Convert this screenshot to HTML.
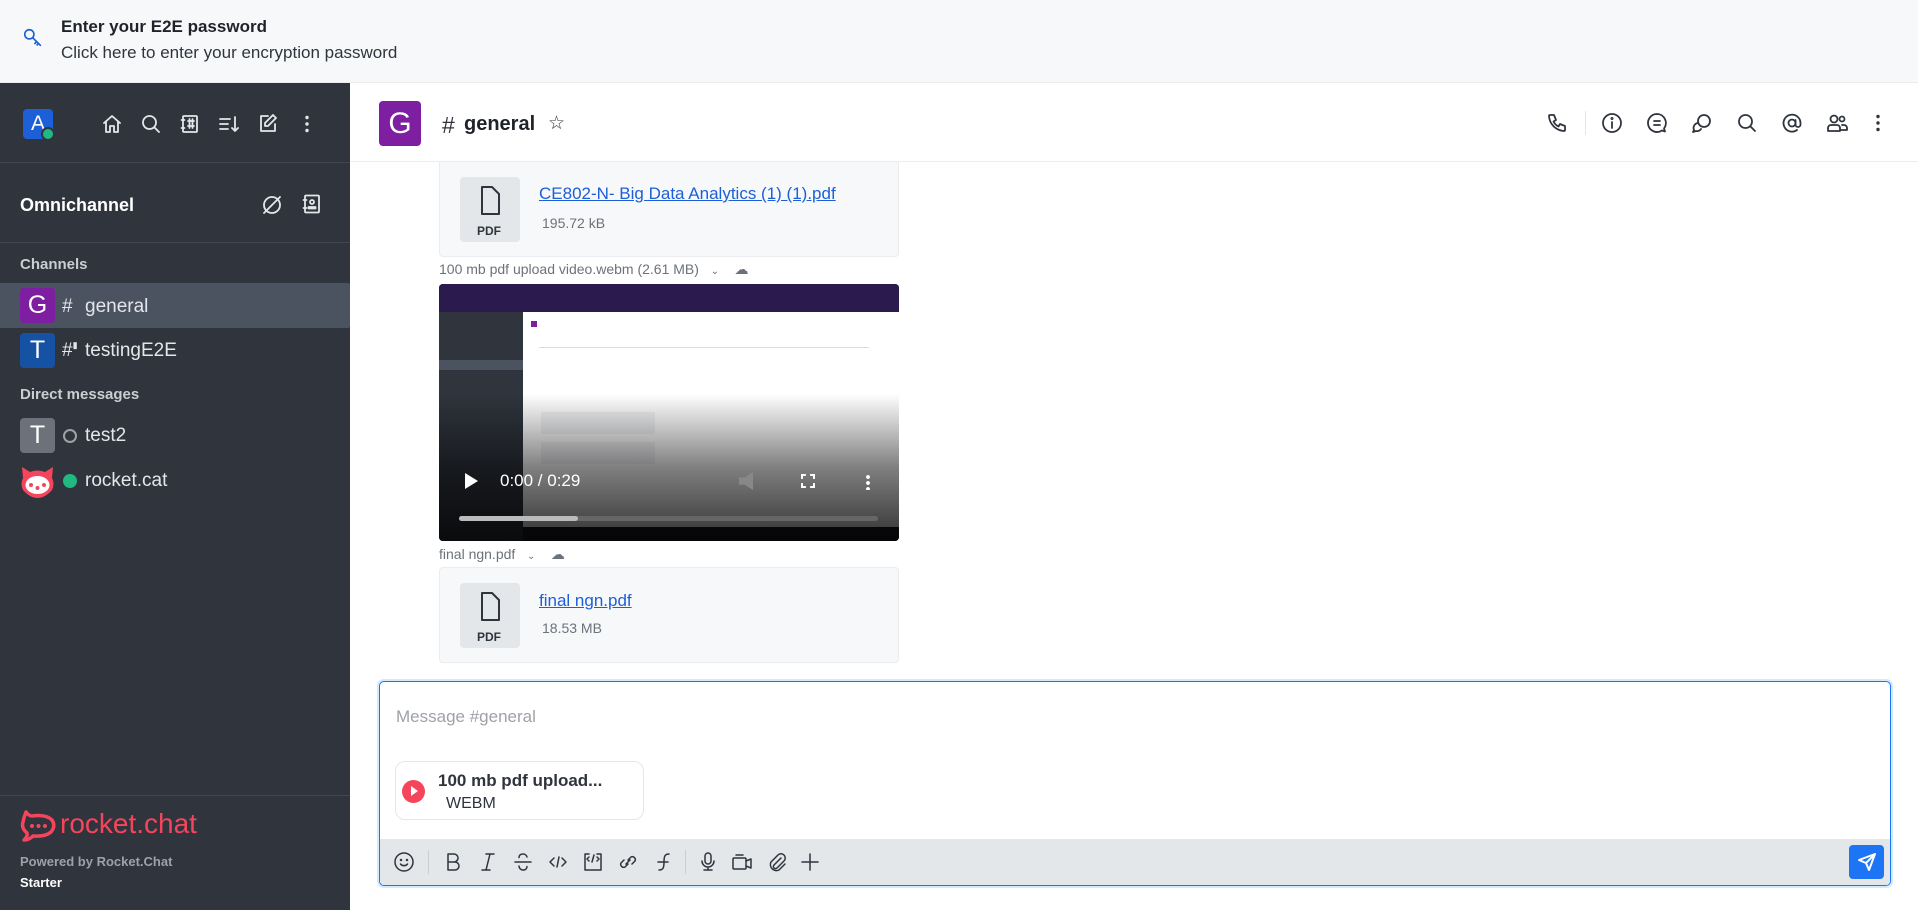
<!DOCTYPE html>
<html><head><meta charset="utf-8"><style>
*{box-sizing:border-box;margin:0;padding:0}
body{width:1918px;height:910px;overflow:hidden;font-family:"Liberation Sans",sans-serif;background:#fff;position:relative;color:#2f343d}
.abs{position:absolute}
svg{display:block}
.ic{stroke:currentColor;fill:none;stroke-width:1.8;stroke-linecap:round;stroke-linejoin:round}
</style></head><body>

<!-- banner -->
<div class="abs" style="left:0;top:0;width:1918px;height:83px;background:#f7f8fa;border-bottom:1px solid #ebecef"></div>
<svg class="abs ic" style="left:22px;top:27px;color:#1d5fd6" width="22" height="22" viewBox="0 0 24 24"><circle cx="8" cy="8" r="5"/><path d="M11.5 11.5 L20 20 M16 16 L14 18 M18 18 L16.5 19.5"/></svg>
<div class="abs" style="left:61px;top:17px;font-size:17px;font-weight:bold;color:#1f2329">Enter your E2E password</div>
<div class="abs" style="left:61px;top:43px;font-size:17px;color:#2f343d">Click here to enter your encryption password</div>

<!-- sidebar -->
<div class="abs" style="left:0;top:83px;width:350px;height:827px;background:#2f343d"></div>
<div class="abs" style="left:23px;top:109px;width:30px;height:30px;background:#1d5fd6;border-radius:4px;color:#fff;font-size:21px;text-align:center;line-height:30px">A</div>
<div class="abs" style="left:41px;top:127px;width:14px;height:14px;border-radius:50%;border:2px solid #2f343d;background:#1fb981"></div>
<div class="abs" style="left:100px;top:112px;color:#e4e7ea;display:flex;gap:15px">
<svg class="ic" width="24" height="24" viewBox="0 0 24 24"><path d="M4 11 L12 4 L20 11 M6 9.5 V20 H10 V14 H14 V20 H18 V9.5"/></svg>
<svg class="ic" width="24" height="24" viewBox="0 0 24 24"><circle cx="10.5" cy="10.5" r="6.5"/><path d="M15.5 15.5 L20 20"/></svg>
<svg class="ic" width="24" height="24" viewBox="0 0 24 24"><rect x="5" y="4" width="14" height="16" rx="1"/><path d="M3.5 8h3M3.5 16h3M10 9h6M10 14h6M11.5 7v9M14.5 7v9"/></svg>
<svg class="ic" width="24" height="24" viewBox="0 0 24 24"><path d="M3 7h10M3 12h8M3 17h8M18 5v14M15 16l3 3 3-3"/></svg>
<svg class="ic" width="24" height="24" viewBox="0 0 24 24"><path d="M12 4H5v15h14v-7M17 3l3 3-8 8h-3v-3z"/></svg>
<svg width="24" height="24" viewBox="0 0 24 24" fill="#e4e7ea"><circle cx="12" cy="5.5" r="1.7"/><circle cx="12" cy="12" r="1.7"/><circle cx="12" cy="18.5" r="1.7"/></svg>
</div>
<div class="abs" style="left:0;top:162px;width:350px;height:1px;background:#404754"></div>
<div class="abs" style="left:20px;top:195px;font-size:18px;font-weight:bold;color:#fff">Omnichannel</div>
<svg class="abs ic" style="left:260px;top:193px;color:#e4e7ea" width="24" height="24" viewBox="0 0 24 24"><circle cx="12" cy="12" r="8"/><path d="M4 20 L20 4"/></svg>
<svg class="abs ic" style="left:300px;top:192px;color:#e4e7ea" width="24" height="24" viewBox="0 0 24 24"><rect x="5" y="3.5" width="14" height="17" rx="1"/><path d="M3.5 8h3M3.5 16h3"/><circle cx="12" cy="10" r="2"/><path d="M8.5 16.5v-1.5h7v1.5z"/></svg>
<div class="abs" style="left:0;top:242px;width:350px;height:1px;background:#404754"></div>
<div class="abs" style="left:20px;top:256px;font-size:15px;font-weight:bold;color:#cbced1">Channels</div>
<div class="abs" style="left:0;top:283px;width:350px;height:45px;background:#4b5260;border-radius:0 2px 2px 0"></div>
<div class="abs" style="left:20px;top:288px;width:35px;height:35px;background:#7e1ea0;border-radius:4px;color:#fff;font-size:25px;text-align:center;line-height:35px">G</div>
<div class="abs" style="left:62px;top:296px;font-size:19px;color:#e4e7ea">#</div>
<div class="abs" style="left:85px;top:296px;font-size:19px;color:#e4e7ea">general</div>
<div class="abs" style="left:20px;top:333px;width:35px;height:35px;background:#1552a3;border-radius:4px;color:#fff;font-size:25px;text-align:center;line-height:35px">T</div>
<div class="abs" style="left:62px;top:340px;font-size:19px;color:#e4e7ea">#<span style="font-size:9px;vertical-align:top">▮</span></div>
<div class="abs" style="left:85px;top:340px;font-size:19px;color:#e4e7ea">testingE2E</div>
<div class="abs" style="left:20px;top:386px;font-size:15px;font-weight:bold;color:#cbced1">Direct messages</div>
<div class="abs" style="left:20px;top:418px;width:35px;height:35px;background:#6c727a;border-radius:4px;color:#fff;font-size:25px;text-align:center;line-height:35px">T</div>
<div class="abs" style="left:63px;top:429px;width:14px;height:14px;border:2px solid #9ea2a8;border-radius:50%"></div>
<div class="abs" style="left:85px;top:425px;font-size:19px;color:#e4e7ea">test2</div>
<svg class="abs" style="left:20px;top:464px" width="35" height="35" viewBox="0 0 35 35"><path d="M2 3 L10 8 Q17 5 25 8 L33 3 L32 14 Q35 20 32 26 Q25 34 17.5 34 Q10 34 3 26 Q0 20 3 14Z" fill="#f5455c"/><ellipse cx="17.5" cy="21" rx="12" ry="9" fill="#fff"/><circle cx="11" cy="21" r="2" fill="#f5455c"/><circle cx="17.5" cy="24" r="2" fill="#f5455c"/><circle cx="24" cy="21" r="2" fill="#f5455c"/></svg>
<div class="abs" style="left:63px;top:474px;width:14px;height:14px;background:#1fb981;border-radius:50%"></div>
<div class="abs" style="left:85px;top:470px;font-size:19px;color:#e4e7ea">rocket.cat</div>
<div class="abs" style="left:0;top:795px;width:350px;height:1px;background:#404754"></div>
<svg class="abs" style="left:20px;top:810px" width="36" height="32" viewBox="0 0 36 32"><path d="M6 2 Q9 6 12 6 Q26 4 32 10 Q36 16 31 22 Q25 27 13 26 Q9 30 4 30 Q8 26 7 23 Q1 18 3 12 Q4 7 6 2Z" fill="none" stroke="#f5455c" stroke-width="3.5" stroke-linejoin="round"/><circle cx="12" cy="16" r="2" fill="#f5455c"/><circle cx="18.5" cy="16" r="2" fill="#f5455c"/><circle cx="25" cy="16" r="2" fill="#f5455c"/></svg>
<div class="abs" style="left:60px;top:808px;font-size:28px;color:#f5455c">rocket.chat</div>
<div class="abs" style="left:20px;top:854px;font-size:13px;font-weight:bold;color:#9ea2a8">Powered by Rocket.Chat</div>
<div class="abs" style="left:20px;top:875px;font-size:13px;font-weight:bold;color:#fff">Starter</div>

<!-- header -->
<div class="abs" style="left:350px;top:161px;width:1568px;height:1px;background:#ebecef"></div>
<div class="abs" style="left:379px;top:101px;width:42px;height:45px;background:#7e1ea0;border-radius:4px;color:#fff;font-size:30px;text-align:center;line-height:45px">G</div>
<div class="abs" style="left:442px;top:112px;font-size:23px;color:#2f343d">#</div>
<div class="abs" style="left:464px;top:113px;font-size:20px;font-weight:bold;color:#1f2329">general</div>
<div class="abs" style="left:548px;top:112px;font-size:19px;color:#2f343d">☆</div>
<div class="abs" style="left:1545px;top:111px;color:#2f343d;display:flex;align-items:center">
<svg class="ic" width="24" height="24" viewBox="0 0 24 24"><path d="M5 4h4l2 5-2.5 1.5a11 11 0 0 0 5 5L15 13l5 2v4a1 1 0 0 1-1 1A16 16 0 0 1 4 5a1 1 0 0 1 1-1z"/></svg>
<div style="width:1px;height:24px;background:#e4e7ea;margin:0 14px 0 16px"></div>
<svg class="ic" width="24" height="24" viewBox="0 0 24 24"><circle cx="12" cy="12" r="9"/><path d="M12 11v6"/><circle cx="12" cy="7.5" r=".6"/></svg>
<svg class="ic" width="24" height="24" viewBox="0 0 24 24" style="margin-left:21px"><path d="M12 3a9 9 0 1 0 5 16.5l3 1-1-3A9 9 0 0 0 12 3zM9 10h6M9 14h6"/></svg>
<svg class="ic" width="24" height="24" viewBox="0 0 24 24" style="margin-left:21px"><circle cx="14" cy="10" r="6"/><path d="M8 12a5 5 0 0 0-4 7l-1 2 3-1a5 5 0 0 0 5-2"/></svg>
<svg class="ic" width="24" height="24" viewBox="0 0 24 24" style="margin-left:21px"><circle cx="10.5" cy="10.5" r="6.5"/><path d="M15.5 15.5L20 20"/></svg>
<svg class="ic" width="24" height="24" viewBox="0 0 24 24" style="margin-left:21px"><circle cx="12" cy="12" r="3.5"/><path d="M15.5 9v4.5a2.5 2.5 0 0 0 5 0V12a8.5 8.5 0 1 0-3.5 7"/></svg>
<svg class="ic" width="24" height="24" viewBox="0 0 24 24" style="margin-left:21px"><circle cx="9" cy="8" r="3.5"/><path d="M3 20v-3a3 3 0 0 1 3-3h6a3 3 0 0 1 3 3v3z"/><circle cx="17" cy="8" r="2.5"/><path d="M17 14h2a3 3 0 0 1 3 3v2h-6"/></svg>
<svg width="24" height="24" viewBox="0 0 24 24" fill="#2f343d" style="margin-left:17px"><circle cx="12" cy="5.5" r="1.7"/><circle cx="12" cy="12" r="1.7"/><circle cx="12" cy="18.5" r="1.7"/></svg>
</div>

<!-- card 1 -->
<div class="abs" style="left:439px;top:162px;width:460px;height:95px;background:#f7f8fa;border:1px solid #ebecef;border-top:none;border-radius:0 0 4px 4px"></div>
<div class="abs" style="left:460px;top:177px;width:60px;height:65px;background:#e4e7ea;border-radius:4px"></div>
<svg class="abs ic" style="left:476px;top:184px;color:#2f343d;stroke-width:2" width="28" height="34" viewBox="0 0 28 34"><path d="M6 3h10l7 7v20H6z"/></svg>
<div class="abs" style="left:477px;top:224px;font-size:12px;font-weight:bold">PDF</div>
<div class="abs" style="left:539px;top:184px;font-size:17px;color:#1d5fd6;text-decoration:underline">CE802-N- Big Data Analytics (1) (1).pdf</div>
<div class="abs" style="left:542px;top:215px;font-size:14px;color:#6c727a">195.72 kB</div>

<div class="abs" style="left:439px;top:261px;font-size:14px;color:#6c727a">100 mb pdf upload video.webm (2.61 MB) &nbsp;&nbsp;<span style="font-size:10px">⌄</span>&nbsp;&nbsp;&nbsp; ☁</div>

<!-- video -->
<div class="abs" style="left:439px;top:284px;width:460px;height:257px;background:#1b1d22;border-radius:4px;overflow:hidden">
 <div class="abs" style="left:0;top:0;width:460px;height:28px;background:#2a1a4e"></div>
 <div class="abs" style="left:0;top:28px;width:84px;height:229px;background:#2f343d"></div>
 <div class="abs" style="left:0;top:76px;width:84px;height:10px;background:#4b5260"></div>
 <div class="abs" style="left:84px;top:28px;width:376px;height:215px;background:#fff"></div>
 <div class="abs" style="left:92px;top:37px;width:6px;height:6px;background:#7e1ea0"></div>
 <div class="abs" style="left:100px;top:63px;width:330px;height:1px;background:#ddd"></div>
 <div class="abs" style="left:102px;top:128px;width:114px;height:22px;background:#f2f3f5"></div>
 <div class="abs" style="left:102px;top:158px;width:114px;height:22px;background:#f2f3f5"></div>
 <div class="abs" style="left:0;top:110px;width:460px;height:147px;background:linear-gradient(rgba(0,0,0,0),rgba(0,0,0,.5) 50%,rgba(0,0,0,.8))"></div>
 <div class="abs" style="left:26px;top:189px;width:0;height:0;border-left:13px solid #fff;border-top:8px solid transparent;border-bottom:8px solid transparent"></div>
 <div class="abs" style="left:61px;top:187px;font-size:17px;color:#fff">0:00 / 0:29</div>
 <div class="abs" style="left:300px;top:188px;width:14px;height:18px;background:#888;clip-path:polygon(0 30%,40% 30%,100% 0,100% 100%,40% 70%,0 70%)"></div>
 <div class="abs" style="left:362px;top:190px;width:14px;height:14px;border:2px solid #fff;clip-path:polygon(0 0,35% 0,35% 100%,65% 100%,65% 0,100% 0,100% 35%,0 35%,0 65%,100% 65%,100% 100%,0 100%)"></div>
 <div class="abs" style="left:427px;top:190px;width:4px;height:16px;background:radial-gradient(circle,#fff 1.8px,transparent 2px) 0 0/4px 6px"></div>
 <div class="abs" style="left:20px;top:232px;width:419px;height:5px;background:#666;border-radius:3px"></div>
 <div class="abs" style="left:20px;top:232px;width:119px;height:5px;background:#bbb;border-radius:3px"></div>
</div>

<div class="abs" style="left:439px;top:546px;font-size:14px;color:#6c727a">final ngn.pdf &nbsp;&nbsp;<span style="font-size:10px">⌄</span>&nbsp;&nbsp;&nbsp; ☁</div>

<!-- card 2 -->
<div class="abs" style="left:439px;top:567px;width:460px;height:96px;background:#f7f8fa;border:1px solid #ebecef;border-radius:4px"></div>
<div class="abs" style="left:460px;top:583px;width:60px;height:65px;background:#e4e7ea;border-radius:4px"></div>
<svg class="abs ic" style="left:476px;top:590px;color:#2f343d;stroke-width:2" width="28" height="34" viewBox="0 0 28 34"><path d="M6 3h10l7 7v20H6z"/></svg>
<div class="abs" style="left:477px;top:630px;font-size:12px;font-weight:bold">PDF</div>
<div class="abs" style="left:539px;top:591px;font-size:17px;color:#1d5fd6;text-decoration:underline">final ngn.pdf</div>
<div class="abs" style="left:542px;top:620px;font-size:14px;color:#6c727a">18.53 MB</div>

<!-- composer -->
<div class="abs" style="left:379px;top:681px;width:1512px;height:205px;border:1.5px solid #1d74f5;border-radius:5px;box-shadow:0 0 0 2px #d1ebfe;overflow:hidden">
 <div class="abs" style="left:0;top:157px;width:1512px;height:48px;background:#e4e7ea"></div>
</div>
<div class="abs" style="left:396px;top:707px;font-size:17px;color:#9ea2a8">Message #general</div>
<div class="abs" style="left:395px;top:761px;width:249px;height:59px;border:1px solid #e4e7ea;border-radius:10px;background:#fff"></div>
<div class="abs" style="left:402px;top:780px;width:23px;height:23px;background:#f5455c;border-radius:50%"></div>
<div class="abs" style="left:411px;top:786px;width:0;height:0;border-left:7px solid #fff;border-top:5.5px solid transparent;border-bottom:5.5px solid transparent"></div>
<div class="abs" style="left:438px;top:771px;font-size:17px;font-weight:bold;color:#2f343d">100 mb pdf upload...</div>
<div class="abs" style="left:446px;top:795px;font-size:16px;color:#2f343d">WEBM</div>

<div class="abs" style="left:392px;top:850px;color:#2f343d;display:flex;align-items:center">
<svg class="ic" width="24" height="24" viewBox="0 0 24 24" style="stroke-width:1.5"><circle cx="12" cy="12" r="9"/><path d="M8.5 14a4.5 4.5 0 0 0 7 0"/><circle cx="9" cy="10" r=".5"/><circle cx="15" cy="10" r=".5"/></svg>
<div style="width:1px;height:24px;background:#cbced1;margin:0 12px"></div>
<svg class="ic" width="24" height="24" viewBox="0 0 24 24" style="stroke-width:1.5"><path d="M7 4h6a4 4 0 0 1 0 8H7zM7 12h7a4 4 0 0 1 0 8H7z"/></svg>
<svg class="ic" width="24" height="24" viewBox="0 0 24 24" style="stroke-width:1.5;margin-left:11px"><path d="M10 4h8M6 20h8M14 4l-4 16"/></svg>
<svg class="ic" width="24" height="24" viewBox="0 0 24 24" style="stroke-width:1.5;margin-left:11px"><path d="M4 12h16M16 7a4 4 0 0 0-4-3c-3 0-4 2-4 3.5M8 16a4 4 0 0 0 4 4c3 0 4-2 4-3.5"/></svg>
<svg class="ic" width="24" height="24" viewBox="0 0 24 24" style="stroke-width:1.5;margin-left:11px"><path d="M8 8l-4 4 4 4M16 8l4 4-4 4M13 7l-2 10"/></svg>
<svg class="ic" width="24" height="24" viewBox="0 0 24 24" style="stroke-width:1.5;margin-left:11px"><path d="M8 4H4v16h16V4h-4M8 7l-2 2 2 2M16 7l2 2-2 2M13 5l-2 7"/></svg>
<svg class="ic" width="24" height="24" viewBox="0 0 24 24" style="stroke-width:1.5;margin-left:11px"><path d="M10 14l4-4M8 10l-3 3a3 3 0 0 0 4 4l3-3M16 14l3-3a3 3 0 0 0-4-4l-3 3"/></svg>
<svg class="ic" width="24" height="24" viewBox="0 0 24 24" style="stroke-width:1.5;margin-left:11px"><path d="M18 4c-4 0-5 2-5 8s-1 8-5 8M7 12h10"/></svg>
<div style="width:1px;height:24px;background:#cbced1;margin:0 10px"></div>
<svg class="ic" width="24" height="24" viewBox="0 0 24 24" style="stroke-width:1.5"><rect x="9" y="3" width="6" height="11" rx="3"/><path d="M6 11a6 6 0 0 0 12 0M12 17v3M8 20h8"/></svg>
<svg class="ic" width="24" height="24" viewBox="0 0 24 24" style="stroke-width:1.5;margin-left:10px"><rect x="3" y="8" width="13" height="11" rx="1"/><path d="M16 11l5-2v9l-5-2M6 5h7"/></svg>
<svg class="ic" width="24" height="24" viewBox="0 0 24 24" style="stroke-width:1.5;margin-left:10px"><path d="M17 8l-7 7a2 2 0 0 0 3 3l7-7a4 4 0 0 0-6-6l-7 7a6 6 0 0 0 8 8l6-6"/></svg>
<svg class="ic" width="24" height="24" viewBox="0 0 24 24" style="stroke-width:1.5;margin-left:10px"><path d="M12 4v16M4 12h16"/></svg>
</div>
<div class="abs" style="left:1849px;top:845px;width:35px;height:34px;background:#1d74f5;border-radius:4px"></div>
<svg class="abs ic" style="left:1855px;top:850px;color:#fff;stroke-width:2" width="24" height="24" viewBox="0 0 24 24"><path d="M20 4L4 10l7 3 3 7zM11 13l9-9"/></svg>

</body></html>
